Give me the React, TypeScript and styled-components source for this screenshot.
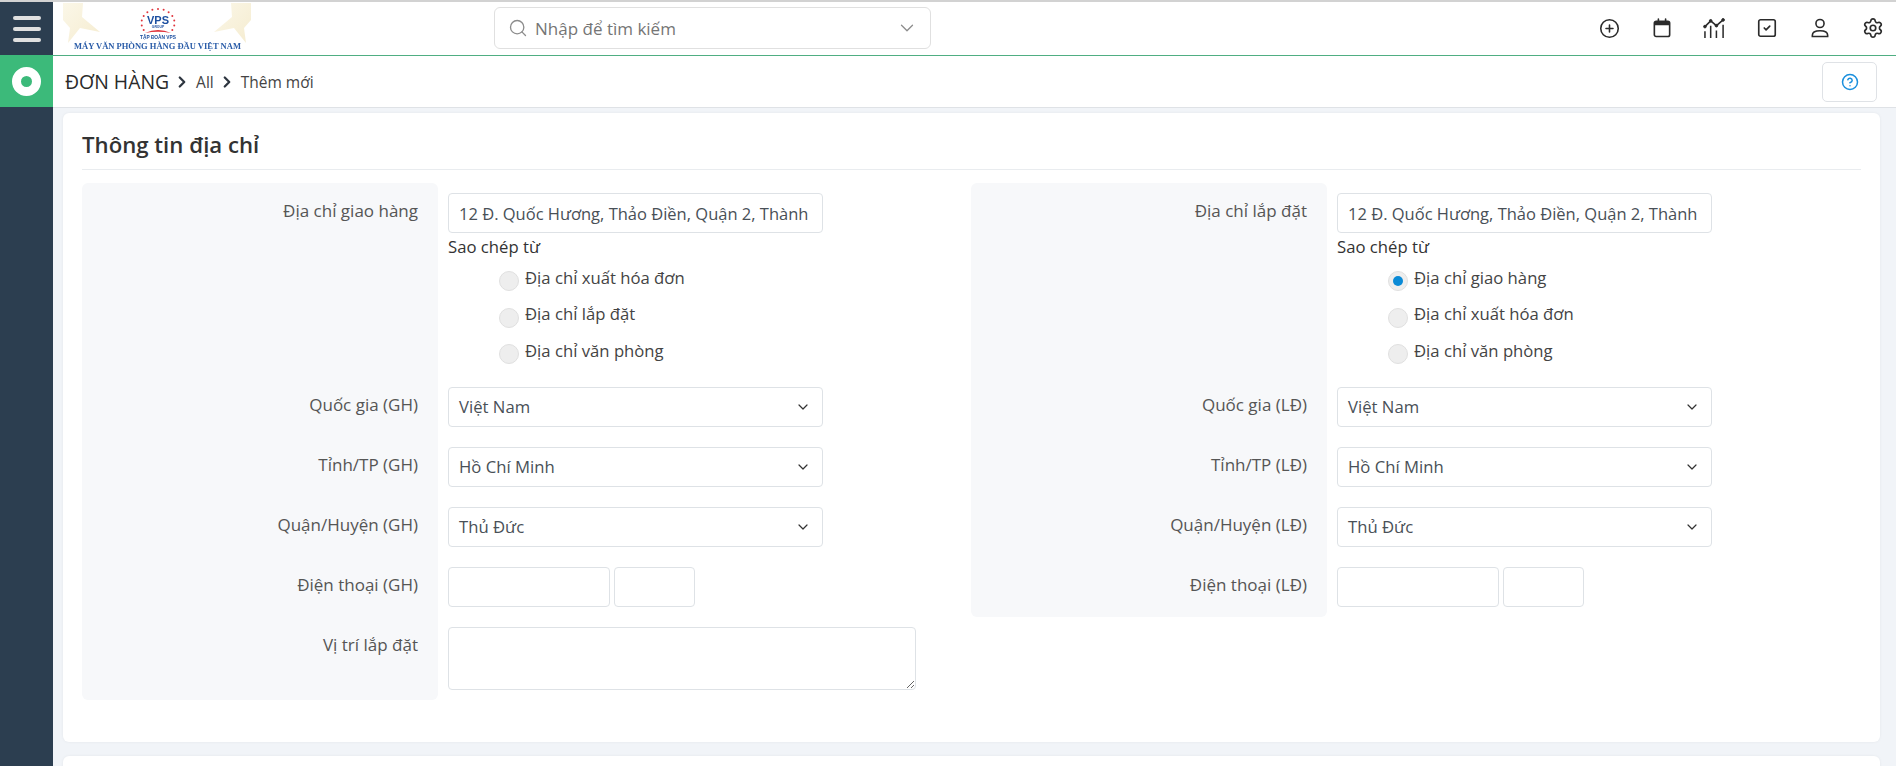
import React from 'react';
import styled, { createGlobalStyle } from 'styled-components';
import { ChevronDown, ChevronRight, CircleHelp, CirclePlus, Search, Settings, SquareCheck } from 'lucide-react';

const GlobalStyle = createGlobalStyle`
  html, body {
    margin: 0;
    height: 100%;
    overflow: hidden;
    background: #f1f4f8;
    font-family: "Open Sans", "Noto Sans", sans-serif;
  }
  * {
    box-sizing: border-box;
  }
`;

const Shell = styled.div`
  display: flex;
  height: 766px;
  overflow: hidden;
  border-top: 2px solid #d2d2d2;
`;

const Rail = styled.aside`
  width: 53px;
  flex: none;
  background: #2c3e50;
`;

const MenuCell = styled.div`
  height: 53px;
  display: flex;
  flex-direction: column;
  align-items: center;
  justify-content: center;
  gap: 7px;
`;

const MenuBar = styled.span`
  width: 28px;
  height: 4px;
  border-radius: 2px;
  background: #e0e0e0;
`;

const StatusCell = styled.div`
  height: 52px;
  background: #3cba7a;
  display: flex;
  align-items: center;
  justify-content: center;
`;

const StatusRing = styled.span`
  width: 29px;
  height: 29px;
  border-radius: 50%;
  border: 9px solid #fff;
`;

const Main = styled.div`
  flex: 1;
  min-width: 0;
  display: flex;
  flex-direction: column;
`;

const TopBar = styled.header`
  height: 54px;
  flex: none;
  display: flex;
  align-items: center;
  padding: 0 12px 1px 10px;
  background: #fff;
  border-bottom: 1px solid #4fae82;
`;

const LogoSvg = styled.svg`
  width: 188px;
  height: 50px;
  flex: none;
  align-self: flex-start;
  margin-top: 1px;
  filter: blur(0.35px);
`;

const SearchBox = styled.div`
  width: 437px;
  height: 42px;
  margin-left: 243px;
  display: flex;
  align-items: center;
  padding: 0 12px 0 13px;
  gap: 7px;
  border: 1px solid #e0e0e0;
  border-radius: 6px;
  color: #8c8c8c;
`;

const SearchText = styled.span`
  flex: 1;
  font-size: 17px;
  color: #757575;
`;

const ActionIcons = styled.nav`
  margin-left: auto;
  display: flex;
  align-items: center;
  gap: 29.6px;
  color: #2b2b2b;
`;

const ActionIcon = styled.span`
  width: 23px;
  height: 23px;
  display: flex;
  align-items: center;
  justify-content: center;
`;

const CrumbBar = styled.div`
  height: 52px;
  flex: none;
  display: flex;
  align-items: center;
  padding: 0 19px 0 12px;
  background: #fff;
  border-bottom: 1px solid #dfe2e6;
  color: #333;
`;

const CrumbTitle = styled.span`
  font-size: 19.4px;
  color: #2a2a2a;
`;

const CrumbArrow = styled.span`
  display: flex;
  width: 20px;
  margin: 0 4px 0 3px;
  justify-content: center;
  color: #2e3640;
`;

const CrumbLink = styled.span`
  font-size: 15.5px;
  color: #444;
`;

const HelpButton = styled.button`
  margin-left: auto;
  width: 55px;
  height: 40px;
  display: flex;
  align-items: center;
  justify-content: center;
  padding: 0;
  background: #fff;
  border: 1px solid #dfe2e6;
  border-radius: 5px;
  color: #1a8fdd;
`;

const Content = styled.main`
  flex: 1;
  padding: 5px 16px 0 10px;
  display: flex;
  flex-direction: column;
  gap: 14px;
  min-height: 0;
`;

const Card = styled.section`
  flex: none;
  height: ${p => p.$height}px;
  padding: 0 19px;
  background: #fff;
  border-radius: 6px;
  box-shadow: 0 0 3px rgba(0, 0, 0, 0.06);
`;

const CardTitle = styled.h3`
  margin: 0;
  height: 57px;
  padding-top: 6px;
  display: flex;
  align-items: center;
  font-size: 22.2px;
  font-weight: 600;
  color: #333;
  border-bottom: 1px solid #e9ecef;
`;

const Columns = styled.div`
  display: grid;
  grid-template-columns: 889px 1fr;
  align-items: start;
  margin-top: 13px;
`;

const FormPanel = styled.div`
  display: flex;
  flex-direction: column;
`;

const Row = styled.div`
  display: grid;
  grid-template-columns: 356px 1fr;
`;

const LabelCell = styled.div`
  padding: 16px 20px 0 0;
  text-align: right;
  font-size: 17px;
  line-height: 24px;
  color: #555;
  background: #f7f8fa;
  border-radius: ${p => (p.$first ? '6px 6px 0 0' : p.$last ? '0 0 6px 6px' : '0')};
`;

const FieldCell = styled.div`
  padding: 10px 0 10px 10px;
  height: ${p => p.$height}px;
`;

const TextBox = styled.div`
  width: 375px;
  height: 40px;
  padding: 0 10px;
  display: flex;
  align-items: center;
  justify-content: space-between;
  font-size: 16.5px;
  white-space: nowrap;
  background: #fff;
  border: 1px solid #dee2e6;
  border-radius: 4px;
  color: #495057;
`;

const SelectBox = styled(TextBox)`
  font-size: 16.7px;
`;

const SelectValue = styled.span`
  margin-top: -2px;
`;

const SelectArrow = styled.span`
  display: flex;
  margin-right: 1px;
  color: #333;
`;

const CopyLabel = styled.div`
  font-size: 16.7px;
  line-height: 24px;
  margin-top: 2px;
  color: #333;
`;

const RadioList = styled.div`
  margin-top: 5px;
  padding-left: 51px;
`;

const RadioRow = styled.label`
  height: 36.5px;
  display: flex;
  align-items: flex-start;
  gap: 6px;
  padding-top: 1.5px;
  font-size: 16.7px;
  line-height: 24px;
  color: #444;
`;

const RadioMark = styled.span`
  width: 20px;
  height: 20px;
  margin-top: 5.5px;
  flex: none;
  display: flex;
  align-items: center;
  justify-content: center;
  border-radius: 50%;
  background: #eee;
  border: 1px solid #e0e0e0;
`;

const RadioDot = styled.span`
  width: 10px;
  height: 10px;
  border-radius: 50%;
  background: #0a8ad6;
`;

const PhoneRow = styled.div`
  display: flex;
  gap: 4px;
`;

const PhoneInput = styled.input`
  width: ${p => p.$width}px;
  height: 40px;
  background: #fff;
  border: 1px solid #dee2e6;
  border-radius: 4px;
`;

const NoteInput = styled.textarea`
  display: block;
  width: 468px;
  height: 63px;
  background: #fff;
  border: 1px solid #dee2e6;
  border-radius: 4px;
`;

const ADDRESS = '12 Đ. Quốc Hương, Thảo Điền, Quận 2, Thành';

const dots = Array.from({ length: 13 }, (_, i) => {
  const a = (Math.PI * (150 + (i * 240) / 12)) / 180;
  return { x: 95 + Math.cos(a) * 16.5, y: 20 + Math.sin(a) * 14 };
});

const Logo = () => (
  <LogoSvg viewBox="0 0 188 50">
    <defs>
      <linearGradient id="starFill" x1="0" y1="0" x2="1" y2="1">
        <stop offset="0" stopColor="#fbf7e8" />
        <stop offset="1" stopColor="#f5ecd0" />
      </linearGradient>
    </defs>
    <polygon points="0,0 20,0 19,14 37,29 17,25 5,40 7,25 0,17" fill="url(#starFill)" />
    <polygon points="188,0 168,0 169,14 151,29 171,25 183,40 181,25 188,17" fill="url(#starFill)" />
    {dots.map(d => (
      <circle key={d.x} cx={d.x} cy={d.y} r="1" fill="#e0343c" />
    ))}
    <text x="95" y="21" textAnchor="middle" fontFamily="Liberation Sans" fontWeight="700" fontSize="11" fill="#1c4fa0">VPS</text>
    <text x="95" y="25" textAnchor="middle" fontFamily="Liberation Sans" fontWeight="700" fontSize="3.4" fill="#1c4fa0">GROUP</text>
    <path d="M82 30 Q95 24 108 30 Q95 27.5 82 30Z" fill="#e0343c" />
    <text x="95" y="35.5" textAnchor="middle" fontFamily="Liberation Sans" fontWeight="700" fontSize="4.8" fill="#1c4fa0">TẬP ĐOÀN VPS</text>
    <text x="94.5" y="46" textAnchor="middle" fontFamily="Liberation Serif" fontWeight="700" fontSize="8.5" fill="#2a5ca8">MÁY VĂN PHÒNG HÀNG ĐẦU VIỆT NAM</text>
  </LogoSvg>
);

const CalendarIcon = () => (
  <svg width="18" height="20" viewBox="0 0 20 22" fill="none">
    <rect x="1.5" y="3.5" width="17" height="17" rx="2" fill="#fff" stroke="#2b2b2b" strokeWidth="1.8" />
    <path d="M1.5 5.5a2 2 0 0 1 2-2h13a2 2 0 0 1 2 2V8h-17Z" fill="#2b2b2b" />
    <path d="M6 1v4M14 1v4" stroke="#2b2b2b" strokeWidth="1.8" strokeLinecap="round" />
  </svg>
);

const TrendIcon = () => (
  <svg width="23" height="21" viewBox="0 0 24 22" fill="none" stroke="#2b2b2b">
    <path d="M2 9l6-6 6 5 7-6" strokeWidth="1.6" />
    <circle cx="8" cy="3" r="1.4" fill="#2b2b2b" />
    <circle cx="14" cy="8" r="1.4" fill="#2b2b2b" />
    <circle cx="21" cy="2" r="1.4" fill="#2b2b2b" />
    <circle cx="2" cy="9" r="1.4" fill="#2b2b2b" />
    <path d="M2 14v7M8 8v13M14 13v8M21 7v14" strokeWidth="1.6" />
  </svg>
);

const UserIcon = () => (
  <svg width="18" height="20" viewBox="0 0 20 22" fill="none" stroke="#2b2b2b" strokeWidth="1.8">
    <circle cx="10" cy="6" r="4.5" />
    <path d="M1.5 20.5v-1.5c0-3 3.5-5 8.5-5s8.5 2 8.5 5v1.5Z" />
  </svg>
);

type Side = {
  addressLabel: string;
  copyOptions: string[];
  selected?: number;
  suffix: string;
  note?: boolean;
};

const SelectField = ({ value }: { value: string }) => (
  <SelectBox>
    <SelectValue>{value}</SelectValue>
    <SelectArrow>
      <ChevronDown size={16} strokeWidth={1.8} />
    </SelectArrow>
  </SelectBox>
);

const AddressForm = ({ addressLabel, copyOptions, selected, suffix, note }: Side) => (
  <FormPanel>
    <Row>
      <LabelCell $first>{addressLabel}</LabelCell>
      <FieldCell $height={194}>
        <TextBox>{ADDRESS}</TextBox>
        <CopyLabel>Sao chép từ</CopyLabel>
        <RadioList>
          {copyOptions.map((option, i) => (
            <RadioRow key={option}>
              <RadioMark>{selected === i && <RadioDot />}</RadioMark>
              {option}
            </RadioRow>
          ))}
        </RadioList>
      </FieldCell>
    </Row>
    <Row>
      <LabelCell>Quốc gia ({suffix})</LabelCell>
      <FieldCell $height={60}>
        <SelectField value="Việt Nam" />
      </FieldCell>
    </Row>
    <Row>
      <LabelCell>Tỉnh/TP ({suffix})</LabelCell>
      <FieldCell $height={60}>
        <SelectField value="Hồ Chí Minh" />
      </FieldCell>
    </Row>
    <Row>
      <LabelCell>Quận/Huyện ({suffix})</LabelCell>
      <FieldCell $height={60}>
        <SelectField value="Thủ Đức" />
      </FieldCell>
    </Row>
    <Row>
      <LabelCell $last={!note}>Điện thoại ({suffix})</LabelCell>
      <FieldCell $height={60}>
        <PhoneRow>
          <PhoneInput $width={162} />
          <PhoneInput $width={81} />
        </PhoneRow>
      </FieldCell>
    </Row>
    {note && (
      <Row>
        <LabelCell $last>Vị trí lắp đặt</LabelCell>
        <FieldCell $height={83}>
          <NoteInput />
        </FieldCell>
      </Row>
    )}
  </FormPanel>
);

const App: React.FC = () => (
  <>
    <GlobalStyle />
    <Shell>
      <Rail>
        <MenuCell>
          <MenuBar />
          <MenuBar />
          <MenuBar />
        </MenuCell>
        <StatusCell>
          <StatusRing />
        </StatusCell>
      </Rail>
      <Main>
        <TopBar>
          <Logo />
          <SearchBox>
            <Search size={20} strokeWidth={1.6} />
            <SearchText>Nhập để tìm kiếm</SearchText>
            <ChevronDown size={22} strokeWidth={1.4} />
          </SearchBox>
          <ActionIcons>
            <ActionIcon><CirclePlus size={21} strokeWidth={1.8} /></ActionIcon>
            <ActionIcon><CalendarIcon /></ActionIcon>
            <ActionIcon><TrendIcon /></ActionIcon>
            <ActionIcon><SquareCheck size={22} strokeWidth={1.8} /></ActionIcon>
            <ActionIcon><UserIcon /></ActionIcon>
            <ActionIcon><Settings size={22} strokeWidth={1.8} /></ActionIcon>
          </ActionIcons>
        </TopBar>
        <CrumbBar>
          <CrumbTitle>ĐƠN HÀNG</CrumbTitle>
          <CrumbArrow><ChevronRight size={18} strokeWidth={3} /></CrumbArrow>
          <CrumbLink>All</CrumbLink>
          <CrumbArrow><ChevronRight size={18} strokeWidth={3} /></CrumbArrow>
          <CrumbLink>Thêm mới</CrumbLink>
          <HelpButton>
            <CircleHelp size={18} strokeWidth={2} />
          </HelpButton>
        </CrumbBar>
        <Content>
          <Card $height={629}>
            <CardTitle>Thông tin địa chỉ</CardTitle>
            <Columns>
              <AddressForm
                addressLabel="Địa chỉ giao hàng"
                copyOptions={['Địa chỉ xuất hóa đơn', 'Địa chỉ lắp đặt', 'Địa chỉ văn phòng']}
                suffix="GH"
                note
              />
              <AddressForm
                addressLabel="Địa chỉ lắp đặt"
                copyOptions={['Địa chỉ giao hàng', 'Địa chỉ xuất hóa đơn', 'Địa chỉ văn phòng']}
                selected={0}
                suffix="LĐ"
              />
            </Columns>
          </Card>
          <Card $height={60} />
        </Content>
      </Main>
    </Shell>
  </>
);

export default App;
